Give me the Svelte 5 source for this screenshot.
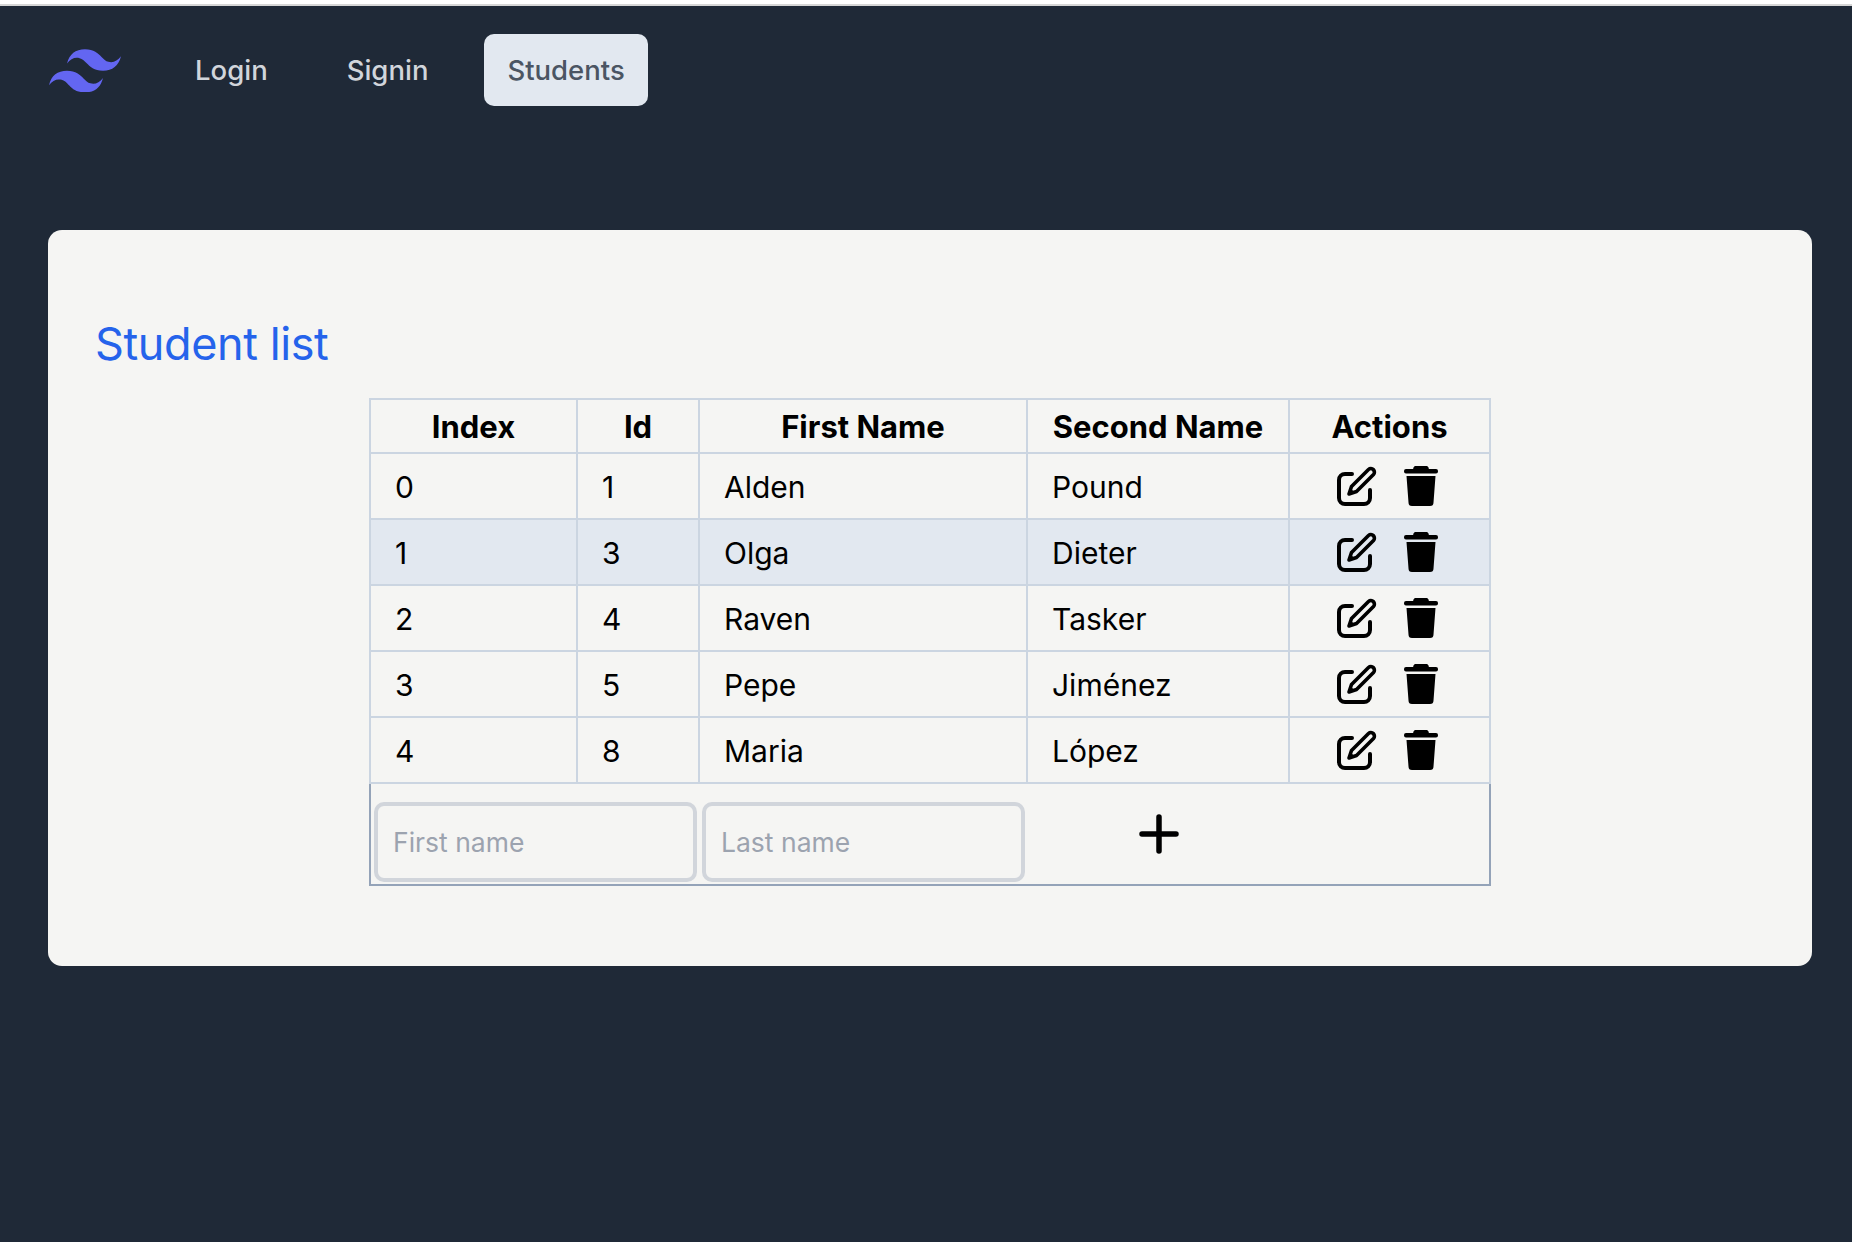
<script>
    let students = [
        { id: 1, first: "Alden", second: "Pound" },
        { id: 3, first: "Olga", second: "Dieter" },
        { id: 4, first: "Raven", second: "Tasker" },
        { id: 5, first: "Pepe", second: "Jiménez" },
        { id: 8, first: "Maria", second: "López" },
    ];
</script>

<div class="page">
    <nav class="nav">
        <svg class="logo" viewBox="0 0 54 32" aria-hidden="true">
            <path fill="#6366f1" d="M27 0c-7.2 0-11.7 3.6-13.5 10.8 2.7-3.6 5.85-4.95 9.45-4.05 2.05.51 3.52 2 5.14 3.65C30.73 13.09 33.79 16.2 40.5 16.2c7.2 0 11.7-3.6 13.5-10.8-2.7 3.6-5.85 4.95-9.45 4.05-2.05-.51-3.52-2-5.14-3.65C36.77 3.11 33.71 0 27 0zM13.5 16.2C6.3 16.2 1.8 19.8 0 27c2.7-3.6 5.85-4.95 9.45-4.05 2.05.51 3.52 2 5.14 3.65 2.64 2.68 5.7 5.8 12.41 5.8 7.2 0 11.7-3.6 13.5-10.8-2.7 3.6-5.85 4.95-9.45 4.05-2.05-.51-3.52-2-5.14-3.65-2.64-2.69-5.7-5.8-12.41-5.8z"/>
        </svg>
        <a class="link" href="#login">Login</a>
        <a class="link" href="#signin">Signin</a>
        <a class="link active" href="#students">Students</a>
    </nav>

    <main class="card">
        <h1>Student list</h1>
        <table>
            <colgroup>
                <col class="c1" /><col class="c2" /><col class="c3" /><col class="c4" /><col class="c5" />
            </colgroup>
            <thead>
                <tr>
                    <th>Index</th>
                    <th>Id</th>
                    <th>First Name</th>
                    <th>Second Name</th>
                    <th>Actions</th>
                </tr>
            </thead>
            <tbody>
                {#each students as s, i}
                    <tr class:hovered={i == 1}>
                        <td>{i}</td>
                        <td>{s.id}</td>
                        <td>{s.first}</td>
                        <td>{s.second}</td>
                        <td class="actions">
                            <svg class="edit" viewBox="0 0 40 40" aria-hidden="true">
                                <path fill="none" stroke="#000" stroke-width="4" stroke-linecap="round" d="M15 8H8a6 6 0 0 0-6 6v18a6 6 0 0 0 6 6h19a6 6 0 0 0 6-6v-8"/>
                                <path fill="none" stroke="#000" stroke-width="3.6" stroke-linejoin="round" d="M12 28l2.5-7.5L31.5 3.5a3.54 3.54 0 0 1 5 5L19.5 25.5z"/>
                                <path fill="#000" d="M12 28l1.8-5.5 3.7 3.7z"/>
                            </svg>
                            <svg class="trash" viewBox="0 0 34 40" aria-hidden="true">
                                <path d="M11.5 0h11a2 2 0 0 1 2 1.6l.4 1.4h7.1a2 2 0 0 1 2 2v.5a2 2 0 0 1-2 2H2a2 2 0 0 1-2-2V5a2 2 0 0 1 2-2h7.1l.4-1.4a2 2 0 0 1 2-1.6z"/>
                                <path d="M2.5 10h29l-2 26.5a3.5 3.5 0 0 1-3.5 3.5H8a3.5 3.5 0 0 1-3.5-3.5z"/>
                            </svg>
                        </td>
                    </tr>
                {/each}
                <tr class="add">
                    <td colspan="2"><input placeholder="First name" /></td>
                    <td><input placeholder="Last name" /></td>
                    <td class="plus">
                        <svg viewBox="0 0 40 40" aria-hidden="true">
                            <path fill="none" stroke="#000" stroke-width="5.5" stroke-linecap="round" d="M20 3v34M3 20h34"/>
                        </svg>
                    </td>
                    <td class="blank"></td>
                </tr>
            </tbody>
        </table>
    </main>
</div>

<style>
    :global(body) {
        margin: 0;
        background: #1f2937;
    }

    .page {
        min-height: 1242px;
        box-sizing: border-box;
        border-top: 4px solid #ffffff;
        background: #1f2937;
        font-family: Inter, "Liberation Sans", sans-serif;
    }

    .nav {
        display: flex;
        align-items: center;
        padding: 28px 0 0 49px;
        border-top: 2px solid #d6d6d6;
    }

    .logo {
        width: 72px;
        height: 43px;
        margin-right: 50px;
    }

    .link {
        font-size: 27.5px;
        font-weight: 500;
        line-height: 72px;
        padding: 0 24px;
        margin-right: 31px;
        border-radius: 10px;
        color: #d1d5db;
        text-decoration: none;
    }

    .link.active {
        padding: 0 23px;
        margin-left: 1px;
        background: #e2e8f0;
        color: #4b5563;
    }

    .card {
        margin: 124px 40px 0 48px;
        height: 736px;
        box-sizing: border-box;
        padding: 87px 0 0 47px;
        background: #f5f5f3;
        border-radius: 14px;
    }

    h1 {
        margin: 0;
        font-size: 45px;
        line-height: 54px;
        font-weight: 400;
        letter-spacing: -0.4px;
        color: #2563eb;
    }

    table {
        margin: 27px 0 0 274px;
        width: 1121px;
        table-layout: fixed;
        border-collapse: collapse;
        color: #000;
    }

    .c1 { width: 207px; }
    .c2 { width: 122px; }
    .c3 { width: 328px; }
    .c4 { width: 262px; }
    .c5 { width: 201px; }

    th, td {
        border: 2px solid #cbd5e1;
        padding: 2px 24px 0;
        font-size: 30px;
        line-height: 36px;
        white-space: nowrap;
        box-sizing: border-box;
    }

    th {
        height: 54px;
        padding: 2px 0 0;
        font-size: 31px;
        font-weight: 700;
        text-align: center;
    }

    td {
        height: 66px;
    }

    tr.hovered td {
        background: #e2e8f0;
    }

    .actions {
        padding: 0 0 0 47px;
    }

    .actions svg {
        display: inline-block;
        vertical-align: middle;
        height: 40px;
    }

    .edit {
        width: 40px;
        margin-right: 19px;
    }

    .trash {
        width: 34px;
    }

    .add td {
        height: 102px;
        border: 0;
        border-top: 2px solid #cbd5e1;
        border-bottom: 2px solid #94a3b8;
        padding: 0 2px 0 3px;
        vertical-align: top;
    }

    .add td:first-child {
        border-left: 2px solid #94a3b8;
    }

    .add td.blank {
        border-right: 2px solid #94a3b8;
    }

    input {
        display: block;
        width: 100%;
        height: 80px;
        margin-top: 18px;
        box-sizing: border-box;
        padding: 0 15px;
        border: 4px solid #d1d5db;
        border-radius: 10px;
        background: transparent;
        font: 400 26.5px Inter, "Liberation Sans", sans-serif;
        outline: none;
    }

    input::placeholder {
        color: #9ca3af;
    }

    .add td.plus {
        vertical-align: middle;
        text-align: center;
    }

    .plus svg {
        display: inline-block;
        vertical-align: middle;
        width: 40px;
        height: 40px;
    }
</style>
